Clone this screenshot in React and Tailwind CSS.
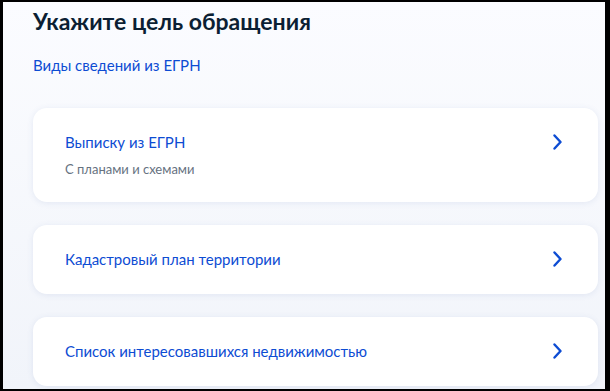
import React from "react";

const items = [
  { title: "Выписку из ЕГРН", sub: "С планами и схемами" },
  { title: "Кадастровый план территории" },
  { title: "Список интересовавшихся недвижимостью" },
];

function Chevron() {
  return (
    <svg width="11" height="16" viewBox="0 0 11 16" fill="none" className="shrink-0">
      <polyline
        points="2.5,1.5 8.5,8 2.5,14.5"
        stroke="#0d4cd3"
        strokeWidth="2.4"
        strokeLinecap="round"
        strokeLinejoin="round"
      />
    </svg>
  );
}

export default function App() {
  return (
    <div className="w-[610px] h-[391px] overflow-hidden border-black border-t-2 border-l-[3px] border-r-[5px] border-b-2 bg-gradient-to-b from-[#fbfcff] to-[#f1f4fa] font-['Lato','Liberation_Sans',sans-serif]">
      <div className="pl-[30px] pr-[7px] pt-[5px]">
        {/* Heading */}
        <h1 className="text-[23px] leading-[28px] font-bold text-[#0b1f33]">Укажите цель обращения</h1>
        <div className="mt-[20px] text-[15px] leading-[20px] text-[#0d4cd3]">Виды сведений из ЕГРН</div>

        {/* Options */}
        <div className="mt-[33px] flex flex-col gap-[23px]">
          {items.map((item) => (
            <div
              key={item.title}
              className="flex items-start justify-between bg-white rounded-[14px] pl-[32px] pr-[35px] pt-[23px] pb-[24px] shadow-[0_1px_6px_rgba(60,90,160,0.10)]"
            >
              <div className="flex flex-col">
                <div className="text-[15px] leading-[22px] text-[#0d4cd3]">{item.title}</div>
                {item.sub && (
                  <div className="mt-[7px] text-[13px] leading-[18px] text-[#66727f]">{item.sub}</div>
                )}
              </div>
              <div className="h-[22px] flex items-center">
                <Chevron />
              </div>
            </div>
          ))}
        </div>
      </div>
    </div>
  );
}
